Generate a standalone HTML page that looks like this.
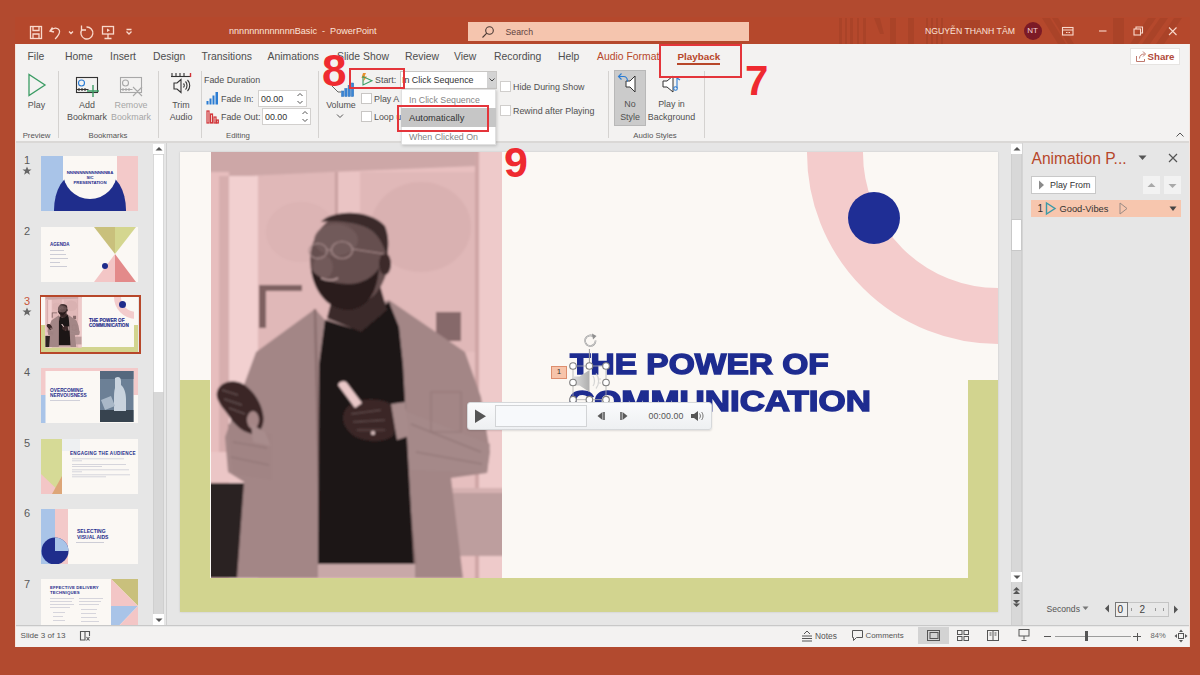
<!DOCTYPE html>
<html><head><meta charset="utf-8">
<style>
*{margin:0;padding:0;box-sizing:border-box}
html,body{width:1200px;height:675px;overflow:hidden;background:#B24A2F;font-family:"Liberation Sans",sans-serif;color:#444;position:relative}
.a{position:absolute}
.t{position:absolute;white-space:nowrap;line-height:14px;font-size:11px;color:#505050}
svg{position:absolute;overflow:visible}
</style></head><body>
<!-- ============ TITLE BAR ============ -->
<div class="a" style="left:15px;top:17px;width:1175px;height:27px;background:#B5482C"></div>
<!-- pattern -->
<svg style="left:830px;top:14px" width="360" height="30" viewBox="0 0 360 30">
 <g fill="#9E3D25" opacity="0.45">
  <rect x="9" y="4" width="3" height="26"/><rect x="15" y="4" width="2" height="26"/><rect x="20" y="4" width="3" height="26"/><rect x="27" y="4" width="2" height="26"/><rect x="33" y="4" width="3" height="26"/>
  <polygon points="44,4 50,4 54,20 50,20"/><rect x="60" y="4" width="6" height="26"/><rect x="78" y="4" width="6" height="26"/>
  <rect x="96" y="4" width="2" height="26"/><rect x="101" y="4" width="2" height="26"/><rect x="106" y="4" width="2" height="26"/><rect x="111" y="4" width="2" height="26"/>
  <rect x="130" y="6" width="20" height="24"/>
  <polygon points="212,4 220,4 236,30 228,30"/><polygon points="222,4 228,4 244,30 238,30"/>
  <rect x="283" y="4" width="11" height="26"/>
  <polygon points="300,30 308,30 326,4 318,4"/><polygon points="312,30 320,30 338,4 330,4"/><polygon points="326,30 334,30 352,4 344,4"/>
 </g>
</svg>
<!-- quick access icons -->
<svg style="left:28px;top:24px" width="110" height="16" viewBox="0 0 110 16">
 <g fill="none" stroke="#F9D9CC" stroke-width="1.3">
  <rect x="2.5" y="2.5" width="11" height="12"/><path d="M5 2.5v4h6v-4M5 14.5v-4.5h6v4.5"/>
  <path d="M24.5 3.5l-2.5 3.5 4 1M22.3 7c2.5-3.5 7.5-4 9-.8 1.2 2.5-1 5.5-4.2 8.8"/>
  <path d="M41 7.5l2 2 2-2"/>
  <path d="M54 5.5A6 6 0 1 0 58.5 3"/><path d="M53.5 1.5v4.5h4.5"/>
  <rect x="74.5" y="2.5" width="11" height="7.5"/><path d="M80 10v4M76.5 14.5h7"/><path d="M79 4.5v3.5l3-1.7z" fill="#F9D9CC" stroke="none"/>
  <path d="M98.5 7.5l2.5 2.5 2.5-2.5M98.5 5.5h5"/>
 </g>
</svg>
<div class="t" style="left:229px;top:24px;font-size:9.1px;color:#FCE4DA">nnnnnnnnnnnnnBasic&nbsp;&nbsp;-&nbsp;&nbsp;PowerPoint</div>
<div class="a" style="left:468px;top:22px;width:281px;height:19px;background:#F5C5AE"></div>
<svg style="left:481px;top:25px" width="14" height="14" viewBox="0 0 14 14"><g fill="none" stroke="#4a3a34" stroke-width="1.1"><circle cx="8.5" cy="5.5" r="3.8"/><path d="M5.8 8.2L1.5 12.5"/></g></svg>
<div class="t" style="left:505.5px;top:25px;font-size:8.7px;color:#5E433D">Search</div>
<div class="t" style="left:925px;top:24px;font-size:8.7px;color:#FCE4DA">NGUYỄN THANH TÂM</div>
<div class="a" style="left:1023.5px;top:22px;width:18px;height:18px;border-radius:50%;background:#7C1A26"></div>
<div class="t" style="left:1023.5px;top:24px;width:18px;text-align:center;font-size:8px;color:#F3D5D5">NT</div>
<svg style="left:1060px;top:24px" width="125" height="16" viewBox="0 0 125 16">
 <g fill="none" stroke="#F9D9CC" stroke-width="1.1">
  <rect x="2.5" y="3.5" width="10.5" height="7.5"/><path d="M2.5 6h10.5M6 8.5h1.5M8.5 8.5h1.5"/>
  <path d="M39 7h7.5"/>
  <rect x="74" y="5" width="6.5" height="6"/><path d="M76 5v-2h6.5v6h-2"/>
  <path d="M109 3.5l7.5 7.5M116.5 3.5l-7.5 7.5"/>
 </g>
</svg>

<!-- ============ WINDOW ============ -->
<div class="a" style="left:15px;top:44px;width:1175px;height:603px;background:#F3F2F1"></div>

<!-- tabs -->
<div class="t" style="left:27.5px;top:49.5px;font-size:10.4px;color:#4e4e4e">File</div>
<div class="t" style="left:65px;top:49.5px;font-size:10.4px;color:#4e4e4e">Home</div>
<div class="t" style="left:110px;top:49.5px;font-size:10.4px;color:#4e4e4e">Insert</div>
<div class="t" style="left:153px;top:49.5px;font-size:10.4px;color:#4e4e4e">Design</div>
<div class="t" style="left:201.5px;top:49.5px;font-size:10.4px;color:#4e4e4e">Transitions</div>
<div class="t" style="left:267.5px;top:49.5px;font-size:10.4px;color:#4e4e4e">Animations</div>
<div class="t" style="left:337px;top:49.5px;font-size:10.4px;color:#4e4e4e">Slide Show</div>
<div class="t" style="left:405px;top:49.5px;font-size:10.4px;color:#4e4e4e">Review</div>
<div class="t" style="left:454px;top:49.5px;font-size:10.4px;color:#4e4e4e">View</div>
<div class="t" style="left:494px;top:49.5px;font-size:10.4px;color:#4e4e4e">Recording</div>
<div class="t" style="left:558px;top:49.5px;font-size:10.4px;color:#4e4e4e">Help</div>
<div class="t" style="left:597px;top:49.5px;font-size:10.4px;color:#B7472A">Audio Format</div>
<div class="t" style="left:677.5px;top:49.5px;font-size:9.9px;color:#B7472A;font-weight:bold">Playback</div>
<div class="a" style="left:677px;top:62.5px;width:43px;height:2px;background:#B7472A"></div>

<!-- share -->
<div class="a" style="left:1130px;top:48px;width:50px;height:17px;background:#FFFFFF;border:1px solid #E6E4E2"></div>
<svg style="left:1135px;top:50px" width="13" height="13" viewBox="0 0 13 13"><g fill="none" stroke="#B86A5E" stroke-width="0.9"><path d="M1.5 6v5.5h8V9"/><path d="M4.5 8.5c0-3 2-4.5 5-4.5M8 1.5l2.5 2.5L8 6.5"/></g></svg>
<div class="t" style="left:1147.5px;top:49.5px;font-size:9.7px;color:#B04A3A;font-weight:bold">Share</div>

<!-- ribbon separators -->
<div class="a" style="left:58px;top:71px;width:1px;height:67px;background:#D4D2D0"></div>
<div class="a" style="left:158px;top:71px;width:1px;height:67px;background:#D4D2D0"></div>
<div class="a" style="left:201px;top:71px;width:1px;height:67px;background:#D4D2D0"></div>
<div class="a" style="left:318px;top:71px;width:1px;height:67px;background:#D4D2D0"></div>
<div class="a" style="left:608px;top:71px;width:1px;height:67px;background:#D4D2D0"></div>
<div class="a" style="left:704px;top:71px;width:1px;height:67px;background:#D4D2D0"></div>

<!-- Preview group -->
<svg style="left:27px;top:73px" width="20" height="24" viewBox="0 0 20 24"><path d="M2 1.5v21l16-10.5z" fill="none" stroke="#3B9C64" stroke-width="1.3"/></svg>
<div class="t" style="left:16px;top:98px;width:41px;text-align:center;font-size:8.9px">Play</div>
<div class="t" style="left:16px;top:128.5px;width:41px;text-align:center;font-size:7.8px;color:#555">Preview</div>

<!-- Bookmarks group -->
<svg style="left:75px;top:76px" width="26" height="22" viewBox="0 0 26 22">
 <g fill="none" stroke-width="1.1"><rect x="1.5" y="1.5" width="21" height="15" stroke="#333"/><circle cx="6.5" cy="7" r="3" stroke="#2B7CD3"/><path d="M1.5 13.5h12M4 12v3M7 12v3M10 12v3" stroke="#333"/><path d="M18 9v12M12 15h12" stroke="#3B9C64" stroke-width="1.4"/></g>
</svg>
<div class="t" style="left:62px;top:98.8px;line-height:12.3px;width:50px;text-align:center;font-size:8.9px">Add<br>Bookmark</div>
<svg style="left:119px;top:76px" width="26" height="22" viewBox="0 0 26 22">
 <g fill="none" stroke="#A8A8A8" stroke-width="1.1"><rect x="1.5" y="1.5" width="21" height="15"/><circle cx="6.5" cy="7" r="3"/><path d="M1.5 13.5h12M4 12v3M7 12v3M10 12v3M14 11l9 9M23 11l-9 9"/></g>
</svg>
<div class="t" style="left:106px;top:98.8px;line-height:12.3px;width:50px;text-align:center;font-size:8.9px;color:#A6A6A6">Remove<br>Bookmark</div>
<div class="t" style="left:80px;top:128.5px;width:56px;text-align:center;font-size:7.8px;color:#555">Bookmarks</div>

<!-- Trim audio -->
<svg style="left:170px;top:72px" width="22" height="24" viewBox="0 0 22 24">
 <g fill="none" stroke="#333" stroke-width="1.1"><path d="M1 4.5h20" stroke="#333"/><path d="M2 1v3M6 1v3M10 1v3M14 1v3" /><path d="M20.5 1v4" stroke="#D13438" stroke-width="1.4"/>
 <path d="M4 11h3l4-3.5v13l-4-3.5H4z"/><path d="M13.5 11.5c1 1 1 3 0 4M15.5 9.5c2 2 2 6 0 8M17.5 8c3 3 3 8 0 11"/></g>
</svg>
<div class="t" style="left:166px;top:98.8px;line-height:12.3px;width:30px;text-align:center;font-size:8.9px">Trim<br>Audio</div>

<!-- Editing -->
<div class="t" style="left:204px;top:73px;font-size:8.9px">Fade Duration</div>
<svg style="left:206px;top:91px" width="13" height="14" viewBox="0 0 13 14"><g fill="#2B7CD3"><rect x="0.5" y="10" width="2" height="3.5"/><rect x="3.5" y="7.5" width="2" height="6"/><rect x="6.5" y="4.5" width="2" height="9"/><rect x="9.5" y="1" width="2.5" height="12.5"/></g></svg>
<div class="t" style="left:221px;top:91.5px;font-size:8.9px">Fade In:</div>
<div class="a" style="left:258px;top:90px;width:49px;height:17px;background:#fff;border:1px solid #D2D0CE"></div>
<div class="t" style="left:261px;top:91.5px;font-size:8.9px;color:#333">00.00</div>
<svg style="left:296px;top:91px" width="8" height="15" viewBox="0 0 8 15"><path d="M1.5 5l2.5-2.5 2.5 2.5M1.5 10l2.5 2.5 2.5-2.5" fill="none" stroke="#555" stroke-width="1"/></svg>
<svg style="left:206px;top:110px" width="13" height="14" viewBox="0 0 13 14"><g fill="none" stroke="#D13438" stroke-width="1.2"><rect x="1" y="1" width="2" height="12"/><rect x="4.5" y="4" width="2" height="9"/><rect x="8" y="7" width="2" height="6"/><rect x="10.5" y="10" width="1.8" height="3"/></g></svg>
<div class="t" style="left:221px;top:110px;font-size:8.9px">Fade Out:</div>
<div class="a" style="left:262px;top:108px;width:49px;height:17px;background:#fff;border:1px solid #D2D0CE"></div>
<div class="t" style="left:265px;top:110px;font-size:8.9px;color:#333">00.00</div>
<svg style="left:301px;top:109px" width="8" height="15" viewBox="0 0 8 15"><path d="M1.5 5l2.5-2.5 2.5 2.5M1.5 10l2.5 2.5 2.5-2.5" fill="none" stroke="#555" stroke-width="1"/></svg>
<div class="t" style="left:210px;top:128.5px;width:56px;text-align:center;font-size:7.8px;color:#555">Editing</div>

<!-- Volume -->
<svg style="left:330px;top:82px" width="25" height="16" viewBox="0 0 25 16"><g fill="#3A86D6" stroke="#2B6FB8" stroke-width="0.5"><rect x="11.5" y="9" width="2.3" height="5.5"/><rect x="14.8" y="6.5" width="2.3" height="8"/><rect x="18.1" y="3.5" width="2.3" height="11"/><rect x="21.4" y="1" width="2.3" height="13.5"/></g><path d="M2 4l6 6h3" stroke="#555" stroke-width="0.9" fill="none"/></svg>
<div class="t" style="left:322px;top:98px;width:38px;text-align:center;font-size:8.9px">Volume</div>
<svg style="left:336px;top:113px" width="8" height="6" viewBox="0 0 8 6"><path d="M1 1.5l3 3 3-3" fill="none" stroke="#555" stroke-width="1"/></svg>

<!-- Start -->
<svg style="left:360px;top:72px" width="14" height="14" viewBox="0 0 14 14"><path d="M3 1l-1.5 5h2.5l-1 4 4-5.5H4.5L6 1z" fill="#E8912D"/><path d="M3 4.5v8.5l9-4.3z" fill="none" stroke="#3B9C64" stroke-width="1.1"/></svg>
<div class="t" style="left:375px;top:73px;font-size:8.9px">Start:</div>
<div class="a" style="left:400px;top:71px;width:97px;height:18px;background:#fff;border:1px solid #C8C6C4"></div>
<div class="t" style="left:402px;top:73px;font-size:8.9px;color:#333">In Click Sequence</div>
<div class="a" style="left:487px;top:72px;width:9px;height:16px;background:#D3D3D3"></div>
<svg style="left:488px;top:77px" width="8" height="6" viewBox="0 0 8 6"><path d="M1.5 1.5l2.5 2.5 2.5-2.5" fill="none" stroke="#444" stroke-width="1"/></svg>
<div class="a" style="left:360.5px;top:92.5px;width:11px;height:11px;background:#fff;border:1px solid #C8C6C4"></div>
<div class="t" style="left:374px;top:91.5px;font-size:8.9px">Play A</div>
<div class="a" style="left:360.5px;top:111px;width:11px;height:11px;background:#fff;border:1px solid #C8C6C4"></div>
<div class="t" style="left:374px;top:110px;font-size:8.9px">Loop u</div>
<div class="a" style="left:499.5px;top:81px;width:11px;height:11px;background:#fff;border:1px solid #D0CECC"></div>
<div class="t" style="left:513px;top:80px;font-size:8.9px">Hide During Show</div>
<div class="a" style="left:499.5px;top:105px;width:11px;height:11px;background:#fff;border:1px solid #D0CECC"></div>
<div class="t" style="left:513px;top:104px;font-size:8.9px">Rewind after Playing</div>

<!-- Audio styles -->
<div class="a" style="left:614px;top:70px;width:32px;height:56px;background:#CBCBCB;border:1px solid #B8B8B8"></div>
<svg style="left:617px;top:72px" width="22" height="22" viewBox="0 0 22 22"><path d="M9 9h4l5-5v16l-5-5H9z" fill="#fff" stroke="#333" stroke-width="1"/><path d="M4.5 1.5L1.5 4.5 4.5 7.5M1.5 4.5h5c3 0 4 2.5 4 5" fill="none" stroke="#2B7CD3" stroke-width="1.1"/></svg>
<div class="t" style="left:614px;top:98.3px;width:32px;text-align:center;font-size:8.9px;line-height:12.2px">No<br>Style</div>
<svg style="left:661px;top:74px" width="22" height="20" viewBox="0 0 22 20"><path d="M2 7h4l6-5v16l-6-5H2z" fill="#fff" stroke="#333" stroke-width="1"/><path d="M16 4v10" stroke="#2B7CD3" stroke-width="1.1"/><circle cx="14.5" cy="14.5" r="1.8" fill="none" stroke="#2B7CD3" stroke-width="1.1"/><path d="M16 4l3 2" stroke="#2B7CD3" stroke-width="1.1"/></svg>
<div class="t" style="left:644px;top:98.3px;width:55px;text-align:center;font-size:8.9px;line-height:12.2px">Play in<br>Background</div>
<div class="t" style="left:625px;top:128.5px;width:60px;text-align:center;font-size:7.8px;color:#555">Audio Styles</div>
<svg style="left:1175px;top:131px" width="10" height="7" viewBox="0 0 10 7"><path d="M1.5 5.5l3.5-3.5 3.5 3.5" fill="none" stroke="#555" stroke-width="1"/></svg>

<!-- ribbon bottom shadow -->
<div class="a" style="left:15px;top:141px;width:1175px;height:2px;background:#DAD8D6"></div>
<!-- ============ MAIN AREA ============ -->
<div class="a" style="left:15px;top:143px;width:1175px;height:484px;background:#E6E6E6"></div>
<!-- slide panel -->
<div class="a" style="left:166px;top:143px;width:1px;height:484px;background:#D0D0D0"></div>
<div class="a" style="left:153px;top:144px;width:11px;height:482px;background:#D8D8D8;border-left:1px solid #CFCFCF;border-right:1px solid #CFCFCF"></div>
<div class="a" style="left:153px;top:144px;width:11px;height:10px;background:#FFFFFF"></div>
<svg style="left:155px;top:146px" width="8" height="6" viewBox="0 0 8 6"><path d="M0.5 4.5l3.5-3.5 3.5 3.5z" fill="#555"/></svg>
<div class="a" style="left:153px;top:155px;width:11px;height:237px;background:#FFFFFF;border-left:1px solid #D8D8D8;border-right:1px solid #D8D8D8"></div>
<div class="a" style="left:153px;top:614px;width:11px;height:11px;background:#FFFFFF"></div>
<svg style="left:155px;top:617px" width="8" height="6" viewBox="0 0 8 6"><path d="M0.5 1.5h7L4 5z" fill="#555"/></svg>

<!-- slide numbers -->
<div class="t" style="left:24px;top:153px;font-size:11px;color:#5a5a5a">1</div>
<svg style="left:22px;top:166px" width="10" height="10" viewBox="0 0 10 10"><path d="M5 0.5l1.3 3h3.2l-2.6 2 1 3.2L5 6.8 2.1 8.7l1-3.2-2.6-2h3.2z" fill="#666"/></svg>
<div class="t" style="left:24px;top:224px;font-size:11px;color:#5a5a5a">2</div>
<div class="t" style="left:24px;top:294px;font-size:11px;color:#C8553A">3</div>
<svg style="left:22px;top:307px" width="10" height="10" viewBox="0 0 10 10"><path d="M5 0.5l1.3 3h3.2l-2.6 2 1 3.2L5 6.8 2.1 8.7l1-3.2-2.6-2h3.2z" fill="#666"/></svg>
<div class="t" style="left:24px;top:365px;font-size:11px;color:#5a5a5a">4</div>
<div class="t" style="left:24px;top:436px;font-size:11px;color:#5a5a5a">5</div>
<div class="t" style="left:24px;top:506px;font-size:11px;color:#5a5a5a">6</div>
<div class="t" style="left:24px;top:577px;font-size:11px;color:#5a5a5a">7</div>

<!-- thumb 1 -->
<div class="a" style="left:41px;top:156px;width:97px;height:55px;background:#FBF8F4;overflow:hidden">
  <div class="a" style="left:0;top:0;width:22px;height:55px;background:#A9C4E8"></div>
  <div class="a" style="left:76px;top:0;width:21px;height:55px;background:#F3C9C9"></div>
  <div class="a" style="left:13px;top:18px;width:72px;height:40px;border-radius:22px 22px 0 0 / 36px 36px 0 0;background:#1F2D8C"></div>
  <div class="a" style="left:22px;top:-11px;width:54px;height:54px;border-radius:50%;background:#FBF8F4"></div>
  <div class="a" style="left:20px;top:15px;width:58px;text-align:center;font-size:4.3px;line-height:4.8px;font-weight:bold;color:#1F2D8C">NNNNNNNNNNNNNBA<br>SIC<br>PRESENTATION</div>
</div>
<!-- thumb 2 -->
<div class="a" style="left:41px;top:227px;width:97px;height:55px;background:#FBF8F4;overflow:hidden">
  <svg style="left:0;top:0" width="97" height="55" viewBox="0 0 97 55">
   <polygon points="53,0 74,0 74,27" fill="#C9C07C"/><polygon points="74,0 95,0 74,27" fill="#D4D68F"/>
   <polygon points="74,27 74,55 53,55" fill="#F3C6C6"/><polygon points="74,27 95,55 74,55" fill="#E38A8A"/>
   <circle cx="64" cy="39" r="3" fill="#1F2D8C"/>
   <text x="9" y="19" font-family="Liberation Sans" font-weight="bold" font-size="4.5" fill="#1F2D8C">AGENDA</text>
   <g fill="#c2c2cf"><rect x="9" y="23" width="14" height="0.8"/><rect x="9" y="27" width="16" height="0.8"/><rect x="9" y="31" width="18" height="0.8"/><rect x="9" y="35" width="10" height="0.8"/><rect x="9" y="39" width="17" height="0.8"/></g>
  </svg>
</div>
<!-- thumb 3 selected -->
<div class="a" style="left:39.5px;top:295px;width:101px;height:59px;border:2px solid #B7472A"></div>
<div class="a" style="left:41px;top:297px;width:97px;height:55px;background:#D2D48F;overflow:hidden">
  <div class="a" style="left:4px;top:0;width:89px;height:50px;background:#FBF8F4"></div>
  <div class="a" style="left:73px;top:-22px;width:44px;height:44px;border-radius:50%;border:7px solid #F3CCCC"></div>
  <div class="a" style="left:78px;top:4px;width:7px;height:7px;border-radius:50%;background:#1F2D8C"></div>
  <div class="a" style="left:0;top:0;width:4px;height:28px;background:#FBF8F4"></div>
  <div class="a" style="left:93px;top:0;width:4px;height:28px;background:#FBF8F4"></div>
  <svg style="left:5px;top:0" width="35" height="50" viewBox="0 0 291 426" preserveAspectRatio="none"><use href="#photo"/></svg>
  <div class="a" style="left:48px;top:21px;font-size:4.6px;line-height:5px;font-weight:bold;color:#1F2D8C;-webkit-text-stroke:0.15px #1F2D8C">THE POWER OF<br>COMMUNICATION</div>
</div>
<!-- thumb 4 -->
<div class="a" style="left:41px;top:368px;width:97px;height:55px;background:#FBF8F4;overflow:hidden">
  <svg style="left:0;top:0" width="97" height="55" viewBox="0 0 97 55">
   <rect x="0" y="0" width="97" height="3" fill="#F3CACA"/>
   <rect x="0" y="0" width="4.5" height="27" fill="#F3CACA"/><rect x="0" y="27" width="4.5" height="28" fill="#A9C4E8"/>
   <rect x="92.5" y="0" width="4.5" height="27" fill="#F3CACA"/>
   <rect x="59" y="3" width="33.5" height="51" fill="#6C8096"/>
   <rect x="59" y="3" width="33.5" height="8" fill="#55687E"/>
   <rect x="59" y="42" width="33.5" height="12" fill="#37434F"/>
   <path d="M74 10c3-2 6-1 6 3l0 4c3 2 5 8 5 14v12h-12v-12c0-4 0-8 1-11z" fill="#C9D3DE"/>
   <path d="M60 32l10-4 4 10-10 4z" fill="#A9B8C8"/>
   <text x="9" y="23.5" font-family="Liberation Sans" font-weight="bold" font-size="4.8" fill="#1F2D8C">OVERCOMING</text>
   <text x="9" y="28.8" font-family="Liberation Sans" font-weight="bold" font-size="4.8" fill="#1F2D8C">NERVOUSNESS</text>
   <rect x="9" y="32" width="30" height="0.8" fill="#c6c6d2"/>
  </svg>
</div>
<!-- thumb 5 -->
<div class="a" style="left:41px;top:439px;width:97px;height:55px;background:#FBF8F4;overflow:hidden">
  <svg style="left:0;top:0" width="97" height="55" viewBox="0 0 97 55">
   <rect x="21" y="0" width="18" height="12" fill="#EEF0F2"/>
   <rect x="0" y="0" width="21" height="55" fill="#D6DA96"/>
   <polygon points="0,35 21,55 0,55" fill="#F3C6C6"/><polygon points="21,37 21,55 11,55" fill="#DDA678"/>
   <text x="29" y="15.5" font-family="Liberation Sans" font-weight="bold" font-size="4.6" fill="#1F2D8C" letter-spacing="0.25">ENGAGING THE AUDIENCE</text>
   <g fill="#c6c6d2"><rect x="31" y="19.5" width="52" height="0.7"/><rect x="31" y="21.5" width="10" height="0.7"/><rect x="31" y="25" width="54" height="0.7"/><rect x="31" y="27" width="30" height="0.7"/><rect x="31" y="30.5" width="57" height="0.7"/><rect x="31" y="32.5" width="10" height="0.7"/><rect x="31" y="35.5" width="58" height="0.7"/><rect x="31" y="37.5" width="34" height="0.7"/></g>
  </svg>
</div>
<!-- thumb 6 -->
<div class="a" style="left:41px;top:509px;width:97px;height:55px;background:#FBF8F4;overflow:hidden">
  <svg style="left:0;top:0" width="97" height="55" viewBox="0 0 97 55">
   <rect x="0" y="0" width="14" height="55" fill="#A9C4E8"/><rect x="14" y="0" width="13" height="55" fill="#F3C9C9"/>
   <circle cx="14" cy="42" r="13.5" fill="#1F2D8C"/><path d="M14 42V28.5A13.5 13.5 0 0 1 27.5 42z" fill="#A9C4E8"/>
   <text x="36" y="24" font-family="Liberation Sans" font-weight="bold" font-size="5" fill="#1F2D8C">SELECTING</text>
   <text x="36" y="29.5" font-family="Liberation Sans" font-weight="bold" font-size="5" fill="#1F2D8C">VISUAL AIDS</text>
   <rect x="35" y="33" width="28" height="0.8" fill="#c2c2cf"/>
  </svg>
</div>
<!-- thumb 7 -->
<div class="a" style="left:41px;top:579px;width:97px;height:48px;background:#FBF8F4;overflow:hidden">
  <svg style="left:0;top:0" width="97" height="55" viewBox="0 0 97 55">
   <polygon points="70,0 97,0 97,27" fill="#C9C07C"/><polygon points="70,0 97,27 70,27" fill="#F3C6C6"/>
   <polygon points="70,27 97,27 70,55" fill="#A9C4E8"/><polygon points="97,27 97,55 70,55" fill="#F3C6C6"/>
   <text x="9" y="10" font-family="Liberation Sans" font-weight="bold" font-size="4.3" fill="#1F2D8C" letter-spacing="0.15">EFFECTIVE DELIVERY</text>
   <text x="9" y="15" font-family="Liberation Sans" font-weight="bold" font-size="4.3" fill="#1F2D8C" letter-spacing="0.15">TECHNIQUES</text>
   <g fill="#c6c6d2"><rect x="9" y="19" width="24" height="0.7"/><rect x="9" y="22" width="22" height="0.7"/><rect x="9" y="25" width="24" height="0.7"/><rect x="9" y="28" width="20" height="0.7"/><rect x="12" y="33" width="12" height="0.7"/><rect x="12" y="37" width="10" height="0.7"/><rect x="12" y="41" width="12" height="0.7"/>
   <rect x="38" y="19" width="24" height="0.7"/><rect x="38" y="22" width="22" height="0.7"/><rect x="38" y="25" width="20" height="0.7"/><rect x="40" y="30" width="16" height="0.7"/><rect x="40" y="34" width="15" height="0.7"/><rect x="40" y="38" width="16" height="0.7"/><rect x="40" y="42" width="18" height="0.7"/></g>
  </svg>
</div>

<!-- main vertical scrollbar -->
<div class="a" style="left:1010.5px;top:144px;width:11.5px;height:482px;background:#D8D8D8;border-left:1px solid #CFCFCF;border-right:1px solid #CFCFCF"></div>
<div class="a" style="left:1011px;top:144px;width:11px;height:10px;background:#FFFFFF"></div>
<svg style="left:1013px;top:146px" width="8" height="6" viewBox="0 0 8 6"><path d="M0.5 4.5l3.5-3.5 3.5 3.5z" fill="#555"/></svg>
<div class="a" style="left:1010.5px;top:218.5px;width:11.5px;height:32px;background:#FFFFFF;border:1px solid #C8C8C8"></div>
<div class="a" style="left:1011px;top:572px;width:11px;height:10px;background:#FFFFFF"></div>
<svg style="left:1013px;top:574px" width="8" height="6" viewBox="0 0 8 6"><path d="M0.5 1.5h7L4 5z" fill="#555"/></svg>
<svg style="left:1012px;top:586px" width="9" height="22" viewBox="0 0 9 22"><g fill="#555"><path d="M1 4.5l3.5-3.5 3.5 3.5z"/><path d="M1 8l3.5-3.5L8 8z"/><path d="M1 14h7l-3.5 3.5z"/><path d="M1 17.5h7L4.5 21z"/></g></svg>
<div class="a" style="left:1022px;top:143px;width:1px;height:484px;background:#D4D4D4"></div>
<!-- ============ SLIDE ============ -->
<div class="a" style="left:180px;top:152px;width:818px;height:460px;background:#FBF8F4;overflow:hidden;box-shadow:0 0 2px rgba(0,0,0,0.15)">
  <div class="a" style="left:0;top:228px;width:818px;height:232px;background:#D2D48F"></div>
  <div class="a" style="left:30px;top:0;width:758px;height:426px;background:#FBF8F4"></div>
  <div class="a" style="left:627px;top:-190.5px;width:382px;height:382px;border-radius:50%;border:56.5px solid #F4CCCC"></div>
  <div class="a" style="left:668px;top:40px;width:52px;height:52px;border-radius:50%;background:#1F2E95"></div>
</div>
<!-- photo -->
<svg style="left:211px;top:152px" width="291" height="426" viewBox="0 0 291 426">
 <defs>
  <filter id="bl" x="-5%" y="-5%" width="110%" height="110%"><feGaussianBlur stdDeviation="0.9"/></filter>
  <clipPath id="pc"><rect width="291" height="426"/></clipPath>
 </defs>
 <g clip-path="url(#pc)"><g id="photo" filter="url(#bl)">
 <rect x="-5" y="-5" width="301" height="436" fill="#E8C0C0"/>
 <!-- window area -->
 <rect x="47" y="20" width="219" height="190" fill="#E0B8B8"/>
 <ellipse cx="210" cy="75" rx="50" ry="45" fill="#D4ABAB" opacity="0.6"/>
 <ellipse cx="90" cy="80" rx="35" ry="30" fill="#D8B0B0" opacity="0.5"/>
 <rect x="47" y="200" width="219" height="140" fill="#E6BFBF"/>
 <rect x="126" y="20" width="23" height="180" fill="#EAC4C4"/>
 <rect x="124" y="20" width="3" height="180" fill="#C9A0A0"/>
 <!-- ceiling beam -->
 <polygon points="-5,-5 296,-5 296,12 266,14 120,20 -5,26" fill="#CDA7A7"/>
 <!-- left pillar -->
 <rect x="-5" y="20" width="23" height="410" fill="#E7BEBE"/>
 <rect x="8" y="24" width="10" height="300" fill="#D7AEAE"/>
 <rect x="18" y="24" width="29" height="410" fill="#F2D0D0"/>
 <!-- right pillar -->
 <rect x="264" y="-5" width="4" height="436" fill="#CFA6A6"/>
 <rect x="268" y="-5" width="28" height="436" fill="#EECACA"/>
 <!-- frames -->
 <path d="M48 133h43v6H55v37h-7z" fill="#7E6060"/>
 <rect x="225" y="160" width="25" height="29" fill="#86696A"/>
 <rect x="235" y="340" width="60" height="64" fill="#BD9E9E"/>
 <rect x="235" y="336" width="60" height="5" fill="#D5B1B1"/>
 <rect x="-5" y="300" width="60" height="30" fill="#EBC6C6"/>
 <path d="M-5 331h58v95H-5z" fill="#2C2020"/>
 <!-- jacket body -->
 <polygon points="104,157 114,168 178,148 254,200 270,245 279,300 276,321 240,326 252,426 26,426 33,330 17,320 14,285 34,230 45,200" fill="#A38686"/>
 <!-- sleeves folds -->
 <polygon points="17,272 61,282 61,328 22,322" fill="#A18484"/>
 <path d="M22 290l34 6M20 305l38 8" stroke="#8F7474" stroke-width="1.5" fill="none" opacity="0.7"/>
 <polygon points="176,252 279,292 276,321 200,318 182,300" fill="#A58989"/>
 <path d="M200 272l70 28M205 300l66 12" stroke="#8F7474" stroke-width="1.5" fill="none" opacity="0.7"/>
 <path d="M104 157l6 256" stroke="#8A6E6E" stroke-width="2.5"/>
 <path d="M178 150l26 262" stroke="#8A6E6E" stroke-width="2.5"/>
 <path d="M220 240v40h30v-40z" fill="none" stroke="#8F7474" stroke-width="1.2" opacity="0.7"/>
 <!-- shirt -->
 <polygon points="114,168 140,176 178,150 188,175 192,213 203,414 107,414 108,213" fill="#1A1313"/>
 <rect x="107" y="412" width="97" height="14" fill="#C8A8A8"/>
 <!-- neck -->
 <polygon points="124,135 168,130 176,158 150,180 116,166" fill="#3A2A2A"/>
 <!-- head -->
 <ellipse cx="138" cy="108" rx="39" ry="46" fill="#664F4F"/>
 <ellipse cx="125" cy="88" rx="22" ry="16" fill="#745C5C" opacity="0.8"/>
 <ellipse cx="112" cy="115" rx="10" ry="12" fill="#7A6262" opacity="0.6"/>
 <path d="M110 70c10-12 48-14 64 4 4 10 4 20 2 30-4-12-8-20-16-26-12-8-36-10-50-8z" fill="#3A2A2A"/>
 <ellipse cx="174" cy="112" rx="6" ry="11" fill="#3E2C2C"/>
 <path d="M100 118c4 26 20 40 38 40 18-2 28-16 30-42-6 10-18 16-30 16-14 0-28-4-38-14z" fill="#2A1D1D"/>
 <g fill="none" stroke="#A88C8C" stroke-width="1.1"><ellipse cx="107" cy="99" rx="9" ry="7.5"/><ellipse cx="131" cy="98" rx="10.5" ry="8.5"/><path d="M116 98h4.5M141.5 97l32 5"/></g>
 <path d="M110 126c6 3 12 3 17 0" stroke="#B89A9A" stroke-width="1.5" fill="none"/>
 
 <!-- hands -->
 <path d="M6 240C8 230 22 226 32 232 42 238 50 250 52 262 54 272 50 280 44 282 34 282 24 274 18 264 12 256 4 248 6 240z" fill="#3A2828"/>
 <path d="M11 238l16 5M13 247l18 6M18 256l16 6" stroke="#6E5656" stroke-width="1.2" fill="none"/>
 <ellipse cx="42" cy="268" rx="6" ry="9" fill="#B99696" opacity="0.85"/>
 <path d="M40 272l14 8 6 14-18-4z" fill="#A88C8C"/>
 <path d="M134 258C140 248 160 244 176 250 186 256 188 272 182 284 172 292 150 290 140 282 132 274 130 266 134 258z" fill="#3A2828"/>
 <path d="M140 262l30-4M142 270l32-2M146 278l28 0" stroke="#6A5252" stroke-width="1.1" fill="none"/>
 <path d="M127 233c1-4 7-5 9-2l15 20-7 5z" fill="#E9C8C8"/>
 <circle cx="162" cy="281" r="2" fill="#E0C4C4"/>
 <path d="M180 252l14-2 4 34-12 4z" fill="#A78B8B"/>
 </g></g>
</svg>
<div class="t" style="left:570px;top:344.5px;font-size:28.6px;line-height:38px;font-weight:bold;color:#1E2C90;-webkit-text-stroke:1.4px #1E2C90;transform:scaleX(1.172);transform-origin:0 0">THE POWER OF</div>
<div class="t" style="left:569px;top:381.5px;font-size:28.6px;line-height:38px;font-weight:bold;color:#1E2C90;-webkit-text-stroke:1.4px #1E2C90;transform:scaleX(1.221);transform-origin:0 0">COMMUNICATION</div>

<!-- audio object -->
<div class="a" style="left:551px;top:366px;width:16px;height:13px;background:#F7C4AA;border:1px solid #DD8E6E"></div>
<div class="t" style="left:551px;top:365px;width:16px;text-align:center;font-size:8px;color:#333">1</div>
<svg style="left:568px;top:330.6px" width="44" height="74" viewBox="0 0 44 74">
 <defs><linearGradient id="spk" x1="0" y1="0" x2="1" y2="0"><stop offset="0" stop-color="#D8D8D8"/><stop offset="1" stop-color="#A8A8A8"/></linearGradient></defs>
 <path d="M21.4 18v17" stroke="#9a9a9a" stroke-width="1" fill="none"/>
 <g fill="none" stroke="#8f8f8f" stroke-width="1.6"><path d="M27.6 9.5a5.3 5.3 0 1 1-2.5-4.3"/></g>
 <g fill="none" stroke="#f5f5f5" stroke-width="0.6"><path d="M27.6 9.5a5.3 5.3 0 1 1-2.5-4.3"/></g>
 <path d="M24 2.5l4.5 2.5-3.5 3.5z" fill="#8f8f8f"/>
 <rect x="5" y="35" width="33" height="33.7" fill="none" stroke="#B0B0B0" stroke-width="0.8"/>
 <path d="M6 45.5h5.5l10-6.5v22l-10-6.5H6z" fill="url(#spk)" opacity="0.92"/>
 <g stroke="#D0D0D0" stroke-width="1.2" fill="none" opacity="0.9"><path d="M25 45c2 2.5 2 7.5 0 10M28 42.5c3.5 4 3.5 11 0 15M31 48h2M31 52h2"/></g>
 <g fill="#FFFFFF" stroke="#7f7f7f" stroke-width="1.1">
  <circle cx="5" cy="35" r="3.3"/><circle cx="21.4" cy="35" r="3.3"/><circle cx="38" cy="35" r="3.3"/>
  <circle cx="5" cy="51.5" r="3.3"/><circle cx="38" cy="51.5" r="3.3"/>
  <circle cx="5" cy="68.7" r="3.3"/><circle cx="21.4" cy="68.7" r="3.3"/><circle cx="38" cy="68.7" r="3.3"/>
 </g>
</svg>

<!-- player -->
<div class="a" style="left:467px;top:402px;width:245px;height:28px;background:linear-gradient(#FAFBFC,#EEF0F2);border:1px solid #D6D8DA;border-radius:3px;box-shadow:0 1px 2px rgba(0,0,0,0.12)"></div>
<svg style="left:474px;top:409px" width="13" height="15" viewBox="0 0 13 15"><path d="M1 0.5v13.5l11-6.75z" fill="#555"/></svg>
<div class="a" style="left:494.5px;top:405px;width:92.5px;height:21.5px;background:#F7F9FB;border:1px solid #D2D4D6"></div>
<svg style="left:596px;top:411px" width="10" height="10" viewBox="0 0 10 10"><path d="M6.5 1L1.5 5l5 4z" fill="#5a5a5a"/><rect x="7.2" y="1" width="1.6" height="8" fill="#5a5a5a"/></svg>
<svg style="left:619px;top:411px" width="10" height="10" viewBox="0 0 10 10"><rect x="1.2" y="1" width="1.6" height="8" fill="#5a5a5a"/><path d="M3.5 1l5 4-5 4z" fill="#5a5a5a"/></svg>
<div class="t" style="left:648.5px;top:409px;font-size:8.8px;color:#555;letter-spacing:0.1px">00:00.00</div>
<svg style="left:690px;top:410px" width="14" height="12" viewBox="0 0 14 12"><path d="M1 4h3l4-3v10l-4-3H1z" fill="#555"/><path d="M9.5 3.5c1.2 1.5 1.2 3.5 0 5M11.5 2c2 2 2 6 0 8" stroke="#777" stroke-width="1" fill="none"/></svg>

<!-- ============ ANIMATION PANE ============ -->
<div class="t" style="left:1031.5px;top:149px;font-size:15.6px;line-height:20px;color:#B7472A">Animation P...</div>
<svg style="left:1138px;top:155px" width="9" height="6" viewBox="0 0 9 6"><path d="M0.5 0.5h8L4.5 5z" fill="#555"/></svg>
<svg style="left:1168px;top:153px" width="10" height="10" viewBox="0 0 10 10"><path d="M1 1l8 8M9 1l-8 8" stroke="#555" stroke-width="1.2"/></svg>
<div class="a" style="left:1031px;top:176px;width:65px;height:18px;background:#FFFFFF;border:1px solid #C8C8C8"></div>
<svg style="left:1038px;top:180px" width="7" height="10" viewBox="0 0 7 10"><path d="M1 0.5v9l5-4.5z" fill="#8a8a8a"/></svg>
<div class="t" style="left:1050px;top:178px;font-size:8.9px;color:#333">Play From</div>
<div class="a" style="left:1143px;top:176px;width:17px;height:18px;background:#F2F2F2"></div>
<svg style="left:1147px;top:182px" width="9" height="6" viewBox="0 0 9 6"><path d="M0.5 5h8L4.5 1z" fill="#A8A8A8"/></svg>
<div class="a" style="left:1164px;top:176px;width:17px;height:18px;background:#F2F2F2"></div>
<svg style="left:1168px;top:183px" width="9" height="6" viewBox="0 0 9 6"><path d="M0.5 1h8L4.5 5z" fill="#A8A8A8"/></svg>
<div class="a" style="left:1031px;top:200px;width:150px;height:17px;background:#F7C6AE"></div>
<div class="t" style="left:1037.5px;top:201.5px;font-size:10px;color:#333">1</div>
<svg style="left:1045px;top:202px" width="11" height="13" viewBox="0 0 11 13"><path d="M1.5 1v11l8.5-5.5z" fill="none" stroke="#3A9AA8" stroke-width="1.4"/></svg>
<div class="t" style="left:1059.5px;top:201.5px;font-size:9.3px;color:#333">Good-Vibes</div>
<svg style="left:1119px;top:202px" width="9" height="13" viewBox="0 0 9 13"><path d="M1 1v11l7-5.5z" fill="none" stroke="#9a8a84" stroke-width="1"/></svg>
<svg style="left:1169px;top:206px" width="8" height="6" viewBox="0 0 8 6"><path d="M0.5 0.5h7L4 5z" fill="#444"/></svg>
<div class="t" style="left:1046.5px;top:602px;font-size:8.6px;color:#555">Seconds</div>
<svg style="left:1082px;top:606px" width="7" height="5" viewBox="0 0 7 5"><path d="M0.5 0.5h6L3.5 4z" fill="#777"/></svg>
<svg style="left:1104px;top:604px" width="6" height="9" viewBox="0 0 6 9"><path d="M5 0.5v8L1 4.5z" fill="#555"/></svg>
<div class="a" style="left:1114.5px;top:602px;width:54px;height:15px;border:1px solid #C4C4C4;background:#E8E8E8"></div>
<div class="a" style="left:1114.5px;top:602px;width:13px;height:15px;border:1px solid #777;background:#EEEEEE"></div>
<div class="t" style="left:1117.5px;top:602.5px;font-size:10px;color:#333">0</div>
<div class="a" style="left:1131px;top:608px;width:1px;height:3px;background:#999"></div>
<div class="t" style="left:1139.5px;top:602.5px;font-size:10px;color:#444">2</div>
<div class="a" style="left:1155px;top:608px;width:1px;height:3px;background:#999"></div>
<div class="a" style="left:1163px;top:608px;width:1px;height:3px;background:#999"></div>
<svg style="left:1173px;top:604.5px" width="6" height="9" viewBox="0 0 6 9"><path d="M1 0.5v8L5 4.5z" fill="#555"/></svg>

<!-- ============ STATUS BAR ============ -->
<div class="a" style="left:15px;top:625px;width:1175px;height:1px;background:#C8C8C8"></div>
<div class="a" style="left:15px;top:626px;width:1175px;height:21px;background:#F3F2F1;border-top:1px solid #E8E8E8"></div>
<div class="t" style="left:20.5px;top:629px;font-size:8.1px;color:#555">Slide 3 of 13</div>
<svg style="left:79px;top:630px" width="13" height="12" viewBox="0 0 13 12"><g fill="none" stroke="#555" stroke-width="1.1"><path d="M1.5 1.5h4.5v8.5h-4.5zM6 1.5h4.5v4.5"/><path d="M7.5 7l3 3.5M10.5 7l-3 3.5"/></g></svg>
<svg style="left:801px;top:630px" width="12" height="12" viewBox="0 0 12 12"><g stroke="#555" stroke-width="1" fill="none"><path d="M1 6h10M1 8.5h10M1 11h10M3 4l3-3 3 3"/></g></svg>
<div class="t" style="left:815px;top:629px;font-size:8.4px;color:#555">Notes</div>
<svg style="left:851px;top:629px" width="13" height="13" viewBox="0 0 13 13"><path d="M1.5 1.5h10v7h-6l-3 3v-3h-1z" fill="none" stroke="#555" stroke-width="1"/></svg>
<div class="t" style="left:865.5px;top:629px;font-size:7.9px;color:#555">Comments</div>
<div class="a" style="left:918px;top:627px;width:31px;height:17px;background:#D3D3D3"></div>
<svg style="left:927px;top:630px" width="13" height="11" viewBox="0 0 13 11"><g fill="none" stroke="#555" stroke-width="1"><rect x="0.5" y="0.5" width="12" height="10"/><rect x="3" y="2.5" width="8" height="6"/></g></svg>
<svg style="left:957px;top:630px" width="12" height="11" viewBox="0 0 12 11"><g fill="none" stroke="#555" stroke-width="1"><rect x="0.5" y="0.5" width="4.5" height="4"/><rect x="7" y="0.5" width="4.5" height="4"/><rect x="0.5" y="6.5" width="4.5" height="4"/><rect x="7" y="6.5" width="4.5" height="4"/></g></svg>
<svg style="left:987px;top:630px" width="12" height="11" viewBox="0 0 12 11"><g fill="none" stroke="#555" stroke-width="1"><rect x="0.5" y="0.5" width="11" height="10"/><path d="M6 0.5v10M2.5 3h2M2.5 5h2M7.5 3h2M7.5 5h2"/></g></svg>
<svg style="left:1018px;top:629px" width="12" height="12" viewBox="0 0 12 12"><g fill="none" stroke="#555" stroke-width="1"><rect x="1" y="0.5" width="10" height="6.5"/><path d="M6 7v3.5M3.5 11.5h5"/></g></svg>
<div class="a" style="left:1044px;top:636px;width:7px;height:1px;background:#555"></div>
<div class="a" style="left:1055px;top:636px;width:76px;height:1px;background:#9C9C9C"></div>
<div class="a" style="left:1084.5px;top:631px;width:3.5px;height:10px;background:#555"></div>
<div class="a" style="left:1133px;top:636px;width:8px;height:1px;background:#555"></div>
<div class="a" style="left:1136.5px;top:632.5px;width:1px;height:8px;background:#555"></div>
<div class="t" style="left:1150.5px;top:629px;font-size:7.6px;color:#666">84%</div>
<svg style="left:1174px;top:629px" width="14" height="14" viewBox="0 0 14 14"><rect x="4.5" y="4.5" width="5" height="5" fill="none" stroke="#555" stroke-width="1"/><path d="M7 0.5l-2 2.5h4zM7 13.5l-2-2.5h4zM0.5 7l2.5-2v4zM13.5 7l-2.5-2v4z" fill="#555"/></svg>

<!-- ============ DROPDOWN ============ -->
<div class="a" style="left:400.5px;top:89px;width:95.5px;height:56px;background:#FFFFFF;box-shadow:1px 1px 3px rgba(0,0,0,0.18);border:1px solid #E0E0E0"></div>
<div class="a" style="left:401px;top:108px;width:95px;height:18.5px;background:#C6C6C6"></div>
<div class="t" style="left:409px;top:93px;font-size:8.8px;color:#858585">In Click Sequence</div>
<div class="t" style="left:409px;top:111px;font-size:9.3px;color:#333">Automatically</div>
<div class="t" style="left:409px;top:129.5px;font-size:8.9px;color:#858585">When Clicked On</div>

<!-- ============ ANNOTATIONS ============ -->
<div class="a" style="left:348.5px;top:68px;width:56.5px;height:20.5px;border:2px solid #E4353B"></div>
<div class="a" style="left:397px;top:104.5px;width:91.5px;height:27.5px;border:2px solid #E4353B"></div>
<div class="a" style="left:659px;top:44px;width:83px;height:34px;border:2px solid #E4353B"></div>
<div class="t" style="left:322px;top:49px;font-size:44px;line-height:44px;font-weight:bold;color:#EF2A30">8</div>
<div class="t" style="left:504px;top:140.5px;font-size:43px;line-height:43px;font-weight:bold;color:#EF2A30">9</div>
<div class="t" style="left:745px;top:60.3px;font-size:42px;line-height:42px;font-weight:bold;color:#EF2A30">7</div>

<div class="a" style="left:15px;top:44px;width:1px;height:603px;background:#F6E4DC"></div>
<div class="a" style="left:1189px;top:44px;width:1px;height:603px;background:#F6E4DC"></div>
</body></html>
